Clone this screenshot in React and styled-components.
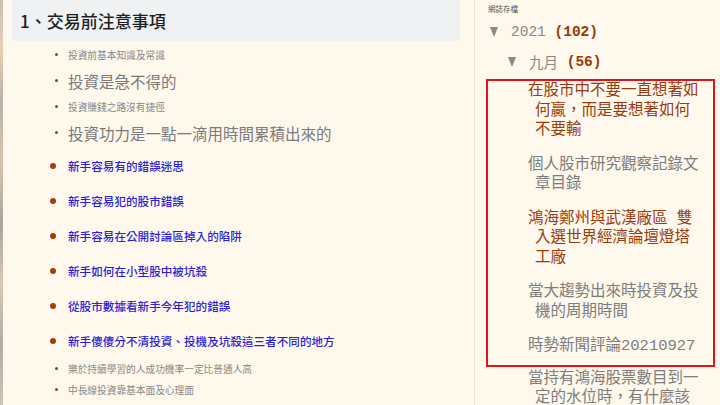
import styled, { createGlobalStyle } from "styled-components";

const GlobalStyle = createGlobalStyle`
  html, body {
    margin: 0;
    padding: 0;
    background: #fff8ec;
    overflow: hidden;
  }
  body {
    font-family: "Noto Sans CJK TC", "Noto Sans", sans-serif;
  }
`;

const Page = styled.div`
  display: flex;
  width: 720px;
  height: 405px;
  overflow: hidden;
  background: #fff8ec;
`;

const Strip = styled.div`
  width: 3px;
  flex-shrink: 0;
  background: linear-gradient(
    180deg,
    #c9bfb3 0%,
    #e9cfb0 12%,
    #b9b1aa 25%,
    #d8c4ac 40%,
    #aaa49f 55%,
    #d9c8b4 70%,
    #b2aca6 85%,
    #cfc3b6 100%
  );
`;

const Main = styled.main`
  width: 472px;
  flex-shrink: 0;
  border-right: 1px solid #ebe4d8;
  padding-left: 9px;
  box-sizing: border-box;
`;

const Heading = styled.h2`
  margin: 0;
  width: 448px;
  height: 41px;
  box-sizing: border-box;
  padding-left: 8px;
  background: #eff1f3;
  color: #1f1f1f;
  font-size: 17px;
  font-weight: 500;
  line-height: 41px;
`;

const List = styled.ul`
  list-style: none;
  margin: 0;
  padding: 3px 0 0 36px;
`;

const sizes = {
  small: { font: "9.7px", height: "21px", color: "#888", weight: 400 },
  large: { font: "15.5px", height: "31px", color: "#7a7a7a", weight: 400 },
  link: { font: "11.6px", height: "35px", color: "#2d1fd8", weight: 500 },
};

const Item = styled.li`
  display: flex;
  align-items: center;
  height: ${(p) => sizes[p.$kind].height};
  font-size: ${(p) => sizes[p.$kind].font};
  color: ${(p) => sizes[p.$kind].color};
  font-weight: ${(p) => sizes[p.$kind].weight};
  white-space: nowrap;
`;

const Dot = styled.span`
  flex-shrink: 0;
  width: ${(p) => (p.$big ? "6px" : "3px")};
  height: ${(p) => (p.$big ? "6px" : "3px")};
  border-radius: 50%;
  background: #a0400d;
  margin-left: ${(p) => (p.$big ? "2px" : "7px")};
  margin-right: ${(p) => (p.$big ? "12px" : "10px")};
`;

const Side = styled.aside`
  flex: 1;
  padding: 5px 0 0 11px;
  font-family: "Liberation Mono", "Noto Sans CJK TC", monospace;
  overflow: hidden;
`;

const Caption = styled.div`
  font-family: "Noto Sans CJK TC", sans-serif;
  font-size: 7.5px;
  line-height: 7px;
  color: #555;
  margin-left: 2px;
`;

const Toggle = styled.div`
  display: flex;
  align-items: center;
  height: ${(p) => (p.$month ? "29px" : "30px")};
  margin-top: ${(p) => (p.$month ? "0" : "5px")};
  padding-left: ${(p) => (p.$month ? "22px" : "4px")};
  font-size: 14.5px;
  color: #888;
  white-space: pre;
`;

const Arrow = styled.span`
  width: 0;
  height: 0;
  border-left: 4.5px solid transparent;
  border-right: 4.5px solid transparent;
  border-top: 10px solid #8a8a8a;
  margin-right: 13px;
`;

const Count = styled.span`
  color: #96390c;
  font-weight: 700;
`;

const Marked = styled.div`
  width: 229px;
  box-sizing: border-box;
  border: 2px solid #e3121c;
  margin-top: 3px;
  padding: 1px 11px 8px 0;
`;

const Posts = styled.ul`
  list-style: none;
  margin: 0;
  padding: 0 0 0 40px;
`;

const Post = styled.li`
  font-size: 15.5px;
  line-height: 19.5px;
  padding-left: 7px;
  text-indent: -7px;
  color: ${(p) => (p.$current ? "#9a3b0d" : "#7d7d7d")};
  & + & {
    margin-top: 15px;
  }
`;

const After = styled(Posts)`
  padding-left: 42px;
  padding-right: 17px;
  margin-top: 3px;
`;

const leftItems = [
  ["small", "投資前基本知識及常識"],
  ["large", "投資是急不得的"],
  ["small", "投資賺錢之路沒有捷徑"],
  ["large", "投資功力是一點一滴用時間累積出來的"],
  ["link", "新手容易有的錯誤迷思"],
  ["link", "新手容易犯的股市錯誤"],
  ["link", "新手容易在公開討論區掉入的陷阱"],
  ["link", "新手如何在小型股中被坑殺"],
  ["link", "從股市數據看新手今年犯的錯誤"],
  ["link", "新手傻傻分不清投資、投機及坑殺這三者不同的地方"],
  ["small", "樂於持續學習的人成功機率一定比普通人高"],
  ["small", "中長線投資靠基本面及心理面"],
];

const posts = [
  [true, "在股市中不要一直想著如何贏，而是要想著如何不要輸"],
  [false, "個人股市研究觀察記錄文章目錄"],
  [true, "鴻海鄭州與武漢廠區 雙入選世界經濟論壇燈塔工廠"],
  [false, "當大趨勢出來時投資及投機的周期時間"],
  [false, "時勢新聞評論20210927"],
];

export default function App() {
  return (
    <>
      <GlobalStyle />
      <Page>
        <Strip />
        <Main>
          <Heading>1、交易前注意事項</Heading>
          <List>
            {leftItems.map(([kind, text]) => (
              <Item key={text} $kind={kind}>
                <Dot $big={kind === "link"} />
                {text}
              </Item>
            ))}
          </List>
        </Main>
        <Side>
          <Caption>網誌存檔</Caption>
          <Toggle>
            <Arrow />
            {"2021 "}
            <Count>(102)</Count>
          </Toggle>
          <Toggle $month>
            <Arrow />
            {"九月 "}
            <Count>(56)</Count>
          </Toggle>
          <Marked>
            <Posts>
              {posts.map(([current, title]) => (
                <Post key={title} $current={current}>
                  {title}
                </Post>
              ))}
            </Posts>
          </Marked>
          <After>
            <Post>當持有鴻海股票數目到一定的水位時，有什麼該注意的事項</Post>
          </After>
        </Side>
      </Page>
    </>
  );
}
